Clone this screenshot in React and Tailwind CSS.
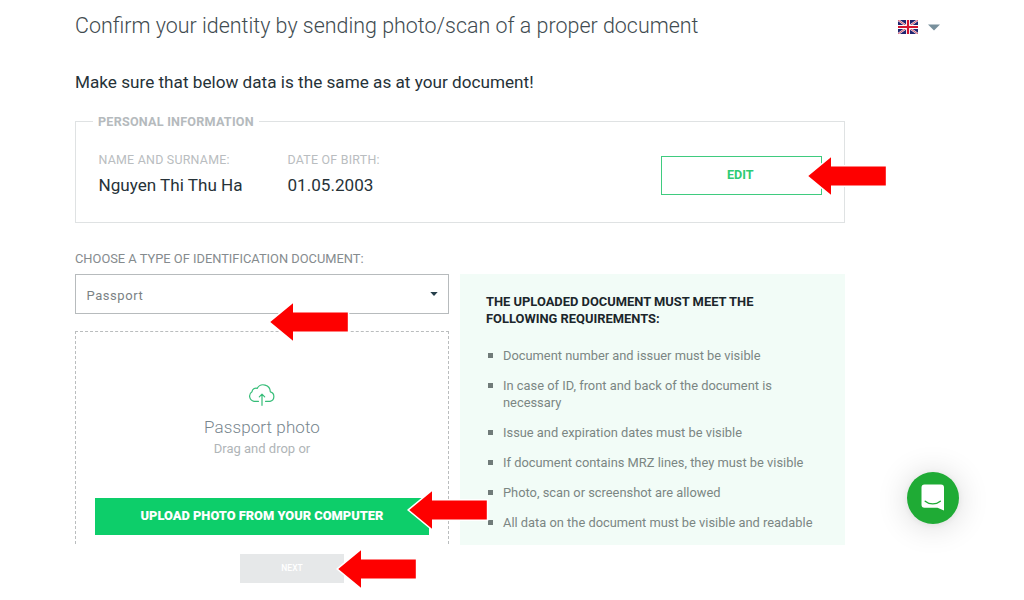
import React from "react";

const requirements = [
  "Document number and issuer must be visible",
  "In case of ID, front and back of the document is necessary",
  "Issue and expiration dates must be visible",
  "If document contains MRZ lines, they must be visible",
  "Photo, scan or screenshot are allowed",
  "All data on the document must be visible and readable",
];

function Arrow({ className }) {
  return (
    <svg className={`absolute z-10 h-[42px] w-[82px] ${className}`} viewBox="-2 -2 82 42" aria-hidden="true">
      <path
        d="M0.3 19 L23 0.3 V9.5 H77.8 V28.5 H23 V37.7 Z"
        fill="#fe0000"
        stroke="#ffffff"
        strokeWidth="3"
        paintOrder="stroke"
      />
    </svg>
  );
}

function Flag() {
  return (
    <svg className="h-[14px] w-[20px]" viewBox="0 0 20 14" aria-hidden="true">
      <rect width="20" height="14" fill="#20236f" />
      <path d="M0 0 L20 14 M20 0 L0 14" stroke="#f0e4ec" strokeWidth="2.2" />
      <path d="M0 0 L20 14 M20 0 L0 14" stroke="#d0324a" strokeWidth="0.8" />
      <path d="M10 0 V14 M0 7 H20" stroke="#ffffff" strokeWidth="4" />
      <path d="M10 0 V14 M0 7 H20" stroke="#d4142e" strokeWidth="2.2" />
    </svg>
  );
}

function Header() {
  return (
    <header className="flex h-[51px] items-center pl-[75px]">
      <h1 className="w-[823px] pt-[2px] text-[21.44px] font-light text-[#414b50]">
        Confirm your identity by sending photo/scan of a proper document
      </h1>
      <button className="flex items-center gap-[10px] pt-[3px]" aria-label="Language">
        <Flag />
        <svg className="h-[7px] w-[12px]" viewBox="0 0 12 7" aria-hidden="true">
          <path d="M0 0.5 H12 L6 6.5 Z" fill="#78909c" />
        </svg>
      </button>
    </header>
  );
}

function Field({ label, value, className }) {
  return (
    <div className={className}>
      <div className="text-[12.4px] leading-[16px] tracking-[0.25px] text-[#b9bdc0]">{label}</div>
      <div className="mt-[5px] text-[17.1px] leading-[24px] text-[#263238]">{value}</div>
    </div>
  );
}

function PersonalInformation() {
  return (
    <fieldset className="mt-[20px] h-[109px] w-[770px] border border-[#dfe2e3] pl-[17px]">
      <legend className="px-[5px] text-[12.6px] leading-[15px] font-bold tracking-[0.23px] text-[#b5babd]">
        PERSONAL INFORMATION
      </legend>
      <div className="flex pt-[23px] pl-[5.5px]">
        <Field label="NAME AND SURNAME:" value="Nguyen Thi Thu Ha" className="w-[189px]" />
        <Field label="DATE OF BIRTH:" value="01.05.2003" className="w-[373px]" />
        <button className="mt-[4px] h-[39px] w-[161.5px] border border-[#3fcb7f] pr-[2px] text-[12.6px] font-bold text-[#2ecb74]">
          EDIT
        </button>
      </div>
    </fieldset>
  );
}

function DocumentUpload() {
  return (
    <div className="w-[374px]">
      <button className="flex h-[40px] w-full items-center justify-between border border-[#b7bbbd] pt-[3px] pr-[10.5px] pl-[10.5px] text-[13px] tracking-[0.55px] text-[#7b8285]">
        Passport
        <svg className="mb-[4px] h-[4px] w-[8px]" viewBox="0 0 8 4" aria-hidden="true">
          <path d="M0.3 0 H7.7 L4 4 Z" fill="#263f4b" />
        </svg>
      </button>
      <div className="mt-[17px] flex h-[213px] flex-col items-center border border-b-0 border-dashed border-[#babdbe]">
        <svg className="mt-[52px] h-[22px] w-[28px]" viewBox="0 0 28 22" fill="none" stroke="#36bd78" strokeWidth="1.2" strokeLinecap="round" strokeLinejoin="round" aria-hidden="true">
          <path d="M10.5 17.3 H6 A5.2 5.2 0 0 1 4 7.8 A4 4 0 0 1 9.2 4.4 A7 7 0 0 1 22.3 7.8 A4.9 4.9 0 0 1 22 17.3 H17.5" />
          <path d="M14 21.3 V10.3 M11.3 12.8 L14 10.1 L16.7 12.8" />
        </svg>
        <div className="mt-[9px] text-[17px] leading-[24px] font-light tracking-[0.1px] text-[#78868e]">Passport photo</div>
        <div className="mt-[1px] text-[13px] leading-[18px] text-[#b0b5b8]">Drag and drop or</div>
        <button className="mt-[40px] h-[37px] w-[334px] bg-[#0dce6a] pb-[2px] text-[12.85px] font-black text-white">
          UPLOAD PHOTO FROM YOUR COMPUTER
        </button>
      </div>
    </div>
  );
}

function Requirements() {
  return (
    <section className="h-[271px] w-[385px] bg-[#f2fcf7] pt-[19px] pl-[26px]">
      <h2 className="w-[300px] text-[12.9px] leading-[17px] font-bold text-[#1b262b]">
        THE UPLOADED DOCUMENT MUST MEET THE FOLLOWING REQUIREMENTS:
      </h2>
      <ul className="mt-[20px] flex w-[345px] flex-col gap-[13px] text-[12.87px] leading-[17px] text-[#7b8683]">
        {requirements.map((text) => (
          <li key={text} className="flex gap-[10px] pl-[2px]">
            <span className="mt-[6px] h-[5px] w-[5px] shrink-0 bg-[#707b79]" />
            <span className="grow">{text}</span>
          </li>
        ))}
      </ul>
    </section>
  );
}

function ChatLauncher() {
  return (
    <button
      className="absolute top-[471.5px] left-[906.5px] flex h-[52px] w-[52px] items-center justify-center rounded-full bg-[#1fab35] shadow-[0_1px_6px_rgba(0,0,0,0.06),0_2px_32px_rgba(0,0,0,0.16)]"
      aria-label="Open chat"
    >
      <svg className="h-[27px] w-[24px]" viewBox="0 0 24 27" aria-hidden="true">
        <path d="M3.5 0.5 H20 A3 3 0 0 1 23 3.5 V26.5 L16.5 23.8 H3.5 A3 3 0 0 1 0.5 20.8 V3.5 A3 3 0 0 1 3.5 0.5 Z" fill="#fff" />
        <path d="M4.2 17.2 C8.5 20.8 15 20.8 19.3 17.2" fill="none" stroke="#1fab35" strokeWidth="1.4" strokeLinecap="round" />
      </svg>
    </button>
  );
}

export default function App() {
  return (
    <div className="relative h-[600px] w-[1024px] overflow-hidden bg-white font-[Roboto,sans-serif]">
      <Header />
      <main className="pl-[75px]">
        <p className="mt-[19px] text-[17.16px] leading-[24px] text-[#263238]">
          Make sure that below data is the same as at your document!
        </p>
        <PersonalInformation />
        <div className="mt-[27px] h-[18px] text-[12.87px] leading-[18px] text-[#858b8e]">
          CHOOSE A TYPE OF IDENTIFICATION DOCUMENT:
        </div>
        <div className="mt-[6px] flex gap-[11px]">
          <DocumentUpload />
          <Requirements />
        </div>
        <button className="mt-[9px] ml-[165px] block h-[29px] w-[104px] bg-[#e6e8e9] text-[8.5px] font-medium text-white">NEXT</button>
      </main>
      <ChatLauncher />
      <Arrow className="top-[155px] left-[806px]" />
      <Arrow className="top-[301px] left-[268px]" />
      <Arrow className="top-[489px] left-[407px]" />
      <Arrow className="top-[548px] left-[336px]" />
    </div>
  );
}
